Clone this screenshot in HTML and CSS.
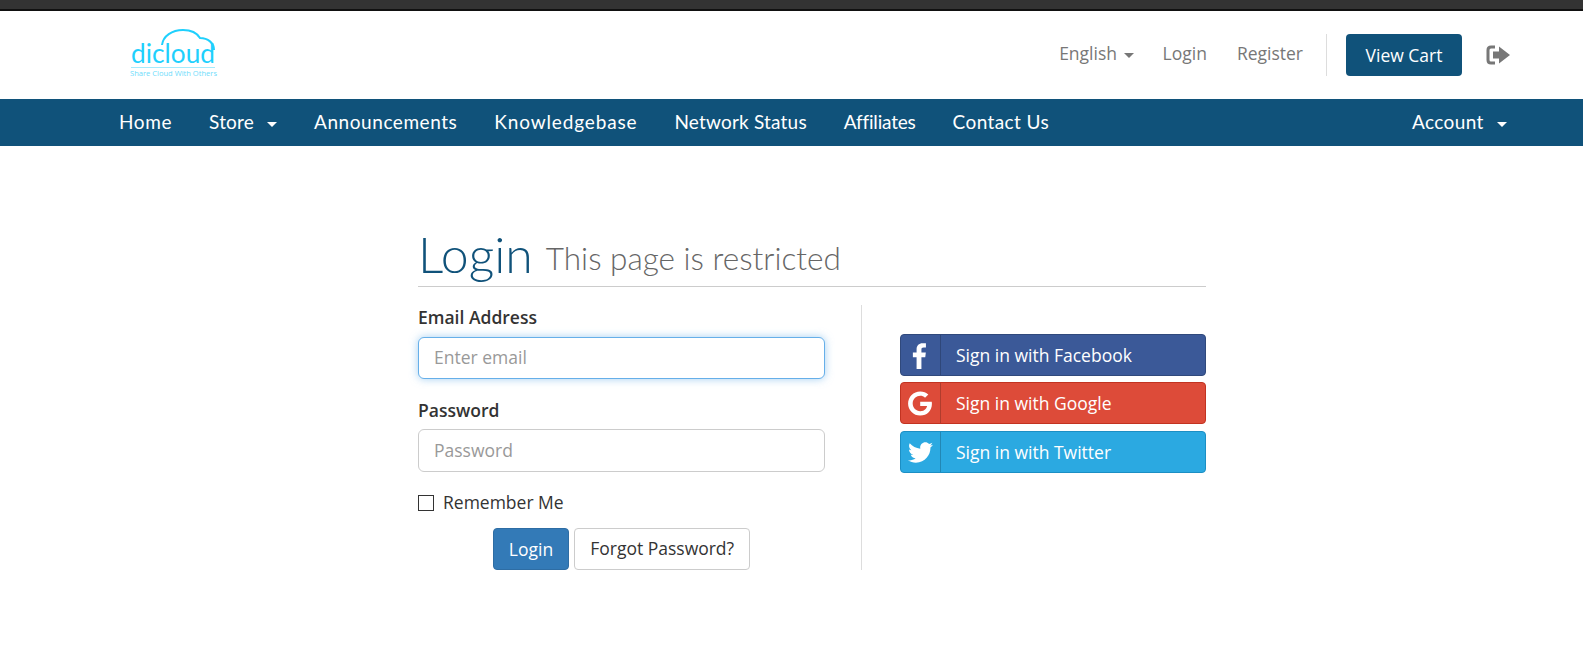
FILE: index.html
```html
<!DOCTYPE html>
<html lang="en">
<head>
  <meta charset="UTF-8" />
  <title>Login - dicloud</title>
  <link rel="stylesheet" href="styles.css">
</head>
<body>
  <div class="topbar"></div>
  <!-- logo + top links -->
  <header class="header">
    <a class="logo" href="#">
      <svg width="92" height="52" viewBox="0 0 92 52">
        <path class="logo-line" d="M32 16C33 7 42 1 53 1C61 1 67 4 70 9C78 9 84 14 84 21" />
        <text class="logo-word" x="1" y="34" textLength="84" lengthAdjust="spacingAndGlyphs">dicloud</text>
        <rect class="logo-rule" x="1" y="38" width="84" height="1" />
        <text class="logo-tag" x="0" y="47" textLength="87" lengthAdjust="spacingAndGlyphs">Share Cloud With Others</text>
      </svg>
    </a>
    <div class="top-links">
      <a href="#" class="top-link lang">English <span class="caret caret-grey"></span></a>
      <a href="#" class="top-link">Login</a>
      <a href="#" class="top-link">Register</a>
      <span class="top-sep"></span>
      <a href="#" class="cart-btn">View Cart</a>
      <a href="#" class="logout">
        <svg width="24" height="20" viewBox="0 0 24 20">
          <path class="logout-box" d="M9 2H5Q2 2 2 5V15Q2 18 5 18H9" />
          <path class="logout-arrow" d="M7 6.500H13V1.500L24 10L13 18.500V13.500H7Z" />
        </svg>
      </a>
    </div>
  </header>
  <!-- main nav -->
  <nav class="navbar">
    <ul class="nav-list">
      <li class="nav-home"><a href="#">Home</a></li>
      <li class="nav-store"><a href="#">Store <span class="caret"></span></a></li>
      <li class="nav-ann"><a href="#">Announcements</a></li>
      <li class="nav-kb"><a href="#">Knowledgebase</a></li>
      <li class="nav-net"><a href="#">Network Status</a></li>
      <li class="nav-aff"><a href="#">Affiliates</a></li>
      <li><a href="#">Contact Us</a></li>
    </ul>
    <a href="#" class="nav-account">Account <span class="caret"></span></a>
  </nav>

  <main class="login-wrap">
    <div class="page-title">
      <h1>Login</h1>
      <small>This page is restricted</small>
    </div>
    <div class="login-cols">
      <form class="login-form" onsubmit="event.preventDefault();">
        <div class="form-group">
          <label for="email">Email Address</label>
          <input type="text" id="email" class="form-control is-focus" placeholder="Enter email">
        </div>
        <div class="form-group">
          <label for="password">Password</label>
          <input type="password" id="password" class="form-control" placeholder="Password">
        </div>
        <label class="remember"><span class="check"></span>Remember Me</label>
        <div class="form-actions">
          <button class="btn btn-primary" type="submit">Login</button>
          <a href="#" class="btn btn-default">Forgot Password?</a>
        </div>
      </form>
      <div class="social">
        <a href="#" class="social-btn fb">
          <span class="social-icon">
            <svg class="icon-fb" width="27" height="27" viewBox="0 0 24 24"><path d="M14.600 24V13.500H18L18.500 9.400H14.600V6.800C14.600 5.600 15 4.800 16.600 4.800H18.600V1.200C18.200 1.100 17 1 15.500 1C12.500 1 10.300 2.900 10.300 6.300V9.400H7V13.500H10.300V24Z" /></svg>
          </span>
          Sign in with Facebook
        </a>
        <a href="#" class="social-btn gg">
          <span class="social-icon">
            <svg class="icon-gg" width="24" height="25" viewBox="0 0 488 512"><path d="M488 261.800C488 403.300 391.100 504 248 504 110.800 504 0 393.200 0 256S110.800 8 248 8c66.800 0 123 24.500 166.300 64.900l-67.500 64.900C258.500 52.600 94.300 116.600 94.300 256c0 86.500 69.100 156.600 153.700 156.600 98.200 0 135-70.400 140.800-106.900H248v-85.300h236.100c2.300 12.700 3.900 24.900 3.900 41.400z" /></svg>
          </span>
          Sign in with Google
        </a>
        <a href="#" class="social-btn tw">
          <span class="social-icon">
            <svg width="25" height="25" viewBox="0 0 512 512"><path d="M459.370 151.716c.325 4.548.325 9.097.325 13.645 0 138.720-105.583 298.558-298.558 298.558-59.452 0-114.680-17.219-161.137-47.106 8.447.974 16.568 1.299 25.340 1.299 49.055 0 94.213-16.568 130.274-44.832-46.132-.975-84.792-31.188-98.112-72.772 6.498.974 12.995 1.624 19.818 1.624 9.421 0 18.843-1.300 27.614-3.573-48.081-9.747-84.143-51.980-84.143-102.985v-1.299c13.969 7.797 30.214 12.670 47.431 13.319-28.264-18.843-46.781-51.005-46.781-87.391 0-19.492 5.197-37.360 14.294-52.954 51.655 63.675 129.300 105.258 216.365 109.807-1.624-7.797-2.599-15.918-2.599-24.040 0-57.828 46.782-104.934 104.934-104.934 30.213 0 57.502 12.670 76.670 33.137 23.715-4.548 46.456-13.320 66.599-25.340-7.798 24.366-24.366 44.833-46.132 57.827 21.117-2.273 41.584-8.122 60.426-16.243-14.292 20.791-32.161 39.308-52.628 54.253z" /></svg>
          </span>
          Sign in with Twitter
        </a>
      </div>
    </div>
  </main>
</body>
</html>
```

FILE: styles.css
```css
* { box-sizing: border-box; }
html, body { height: 670px; overflow: hidden; }
body { margin: 0; background: #fff; font-family: 'Open Sans', Arial, sans-serif; font-size: 17.500px; color: #333; }
a { text-decoration: none; }

.topbar { height: 11px; background: #333; border-bottom: 2px solid #111; }

.header { height: 88px; display: flex; justify-content: space-between; align-items: center; padding: 0 73px 0 130px; }
.logo { display: block; height: 52px; margin-top: -1px; }
.logo svg { display: block; overflow: visible; }
.logo-line { fill: none; stroke: #1fd0fd; stroke-width: 2; }
.logo-word { font-family: 'Lato', sans-serif; font-size: 27px; fill: #1fd0fd; }
.logo-rule { fill: #a5ebfd; }
.logo-tag { font-family: 'Open Sans', sans-serif; font-size: 7.500px; fill: #6fdcfb; }

.top-links { display: flex; align-items: center; }
.top-link { color: #777; font-size: 17.500px; margin-right: 30px; margin-top: -4px; }
.top-link.lang { margin-right: 29px; }
.top-sep { width: 1px; height: 42px; background: #ddd; margin: 0 19px 0 -7px; }
.cart-btn { display: block; width: 116px; height: 42px; line-height: 42px; text-align: center; background: #10527a; color: #fff; font-size: 17.500px; border-radius: 4px; }
.logout { display: block; margin-left: 24px; height: 20px; margin-right: 0; }
.logout svg { display: block; }
.logout-box { fill: none; stroke: #777; stroke-width: 3; }
.logout-arrow { fill: #777; }

.caret { display: inline-block; width: 0; height: 0; margin-left: 8px; vertical-align: middle; border-top: 5px solid #fff; border-left: 5px solid transparent; border-right: 5px solid transparent; }
.caret-grey { border-top-color: #777; margin-left: 2px; }

.navbar { height: 47px; background: #10527a; display: flex; justify-content: space-between; align-items: center; padding: 0 76px 2px 119px; font-family: 'Lato', sans-serif; font-size: 19px; letter-spacing: .4px; }
.nav-list { display: flex; gap: 37px; margin: 0; padding: 0; list-style: none; }
.navbar a { color: #fff; }
.nav-home { letter-spacing: .6px; }
.nav-store { letter-spacing: .2px; }
.nav-ann { letter-spacing: .55px; }
.nav-kb { letter-spacing: .85px; }
.nav-net { letter-spacing: .2px; }
.nav-aff { letter-spacing: -.2px; }

.login-wrap { width: 788px; margin: 78px 0 0 418px; }
.page-title { display: flex; align-items: flex-start; gap: 13px; height: 63px; border-bottom: 1px solid #ccc; font-family: 'Lato', sans-serif; }
.page-title h1 { margin: 0; font-size: 50px; font-weight: 300; line-height: 60px; color: #10527a; }
.page-title small { margin-top: 14px; font-size: 31.500px; font-weight: 300; line-height: 40px; color: #666; }

.login-cols { display: flex; margin-top: 18px; }
.login-form { width: 444px; padding-right: 36px; border-right: 1px solid #ddd; height: 265px; }
.form-group { margin-bottom: 18px; }
.form-group label { display: block; height: 27px; line-height: 24px; margin-bottom: 5px; font-weight: 600; }
.form-group + .form-group label { line-height: 26px; }
.form-control { display: block; width: 100%; height: 43px; padding: 0 15px 2px; border: 1px solid #ccc; border-radius: 6px; font: 17.500px 'Open Sans', Arial, sans-serif; color: #555; outline: none; }
.form-control::placeholder { color: #999; opacity: 1; }
.form-control.is-focus { height: 42px; border-color: #66afe9; box-shadow: 0 0 8px rgba(102,175,233,.6); }
.remember { display: flex; align-items: center; height: 24px; margin-top: 18px; }
.check { width: 16px; height: 16px; margin-top: 2px; border: 1px solid #333; margin-right: 9px; }
.form-actions { display: flex; justify-content: center; gap: 5px; margin-top: 14px; }
.btn { display: block; height: 42px; padding: 0 15px; border: 1px solid transparent; border-radius: 4px; font: 17.500px/38px 'Open Sans', Arial, sans-serif; }
.btn-primary { background: #337ab7; border-color: #2e6da4; color: #fff; }
.btn-default { background: #fff; border-color: #ccc; color: #333; }

.social { flex: 1; padding: 29px 0 0 38px; }
.social-btn { display: flex; align-items: center; height: 42px; margin-bottom: 6px; border: 1px solid; border-radius: 4px; color: #fff; font-size: 17.500px; }
.social-btn.tw { margin-top: 7px; }
.social-icon { display: flex; justify-content: center; align-items: center; width: 40px; height: 100%; margin-right: 15px; border-right: 1px solid rgba(0,0,0,.2); }
.social-icon svg { display: block; fill: #fff; }
.icon-fb { margin-right: 4px; }
.icon-gg { margin-right: 1px; }
.fb { background: #3b5998; border-color: #30497c; }
.gg { background: #dd4b39; border-color: #c23321; }
.tw { background: #2ba9e1; border-color: #1c8fc4; }
```
